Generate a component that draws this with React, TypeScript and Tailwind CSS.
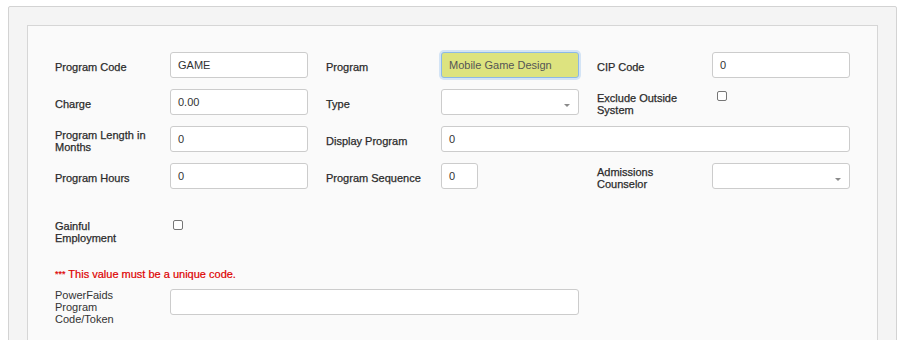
import React from "react";

const Label = ({ children, col }: { children: React.ReactNode; col: string }) => (
  <div className={`${col} h-[26px] pt-[4px] flex items-center leading-[12px] text-[#2b2b2b] [-webkit-text-stroke:0.25px_#2b2b2b]`}>
    <span>{children}</span>
  </div>
);

const Input = ({ value, col, extra = "" }: { value?: string; col: string; extra?: string }) => (
  <div
    className={`${col} h-[26px] border border-[#cccccc] rounded-[3px] bg-white px-[7px] flex items-center text-[#333] ${extra}`}
  >
    {value}
  </div>
);

const Select = ({ col }: { col: string }) => (
  <div className={`${col} h-[26px] border border-[#cccccc] rounded-[3px] bg-white flex items-center justify-end pr-[8px] pt-[7px]`}>
    <div className="w-0 h-0 border-x-[3px] border-x-transparent border-t-[3px] border-t-[#8a8a8a]" />
  </div>
);

const Checkbox = ({ className = "" }: { className?: string }) => (
  <div className={`w-[10px] h-[10px] border border-[#767676] rounded-[2px] bg-white ${className}`} />
);

export default function App() {
  const grid = "grid grid-cols-[115px_138px_18px_115px_138px_18px_115px_138px]";
  return (
    <div className="min-h-[340px] bg-white pt-[6px] font-['Liberation_Sans',Arial,sans-serif] text-[11px]">
      <div className="ml-[8px] w-[889px] border border-[#d3d3d3] rounded-[2px] bg-[#f4f4f4] p-[18px]">
        <div className="border border-[#d6d6d6] bg-[#fafafa] pl-[27px] pt-[26px] pb-[40px]">
          <div className={`${grid} gap-y-[11px]`}>
            <Label col="col-start-1">Program Code</Label>
            <Input col="col-start-2" value="GAME" />
            <Label col="col-start-4">Program</Label>
            <div className="col-start-5 h-[26px] border border-[#8cb9e8] rounded-[3px] bg-[#dde37f] px-[7px] flex items-center text-[#555] shadow-[0_0_0_2px_rgba(140,185,235,0.35)]">
              Mobile Game Design
            </div>
            <Label col="col-start-7">CIP Code</Label>
            <Input col="col-start-8" value="0" />

            <Label col="col-start-1">Charge</Label>
            <Input col="col-start-2" value="0.00" />
            <Label col="col-start-4">Type</Label>
            <Select col="col-start-5" />
            <Label col="col-start-7">
              Exclude Outside
              <br />
              System
            </Label>
            <div className="col-start-8 h-[26px]">
              <Checkbox className="ml-[5px] mt-[2px]" />
            </div>

            <Label col="col-start-1">
              Program Length in
              <br />
              Months
            </Label>
            <Input col="col-start-2" value="0" />
            <Label col="col-start-4">Display Program</Label>
            <Input col="col-start-5 col-span-4" value="0" />

            <Label col="col-start-1">Program Hours</Label>
            <Input col="col-start-2" value="0" />
            <Label col="col-start-4">Program Sequence</Label>
            <div className="col-start-5 flex">
              <div className="w-[37px] h-[26px] border border-[#cccccc] rounded-[3px] bg-white px-[7px] flex items-center text-[#333]">
                0
              </div>
            </div>
            <Label col="col-start-7">
              Admissions
              <br />
              Counselor
            </Label>
            <Select col="col-start-8" />
          </div>

          <div className={`${grid} mt-[28px]`}>
            <Label col="col-start-1">
              Gainful
              <br />
              Employment
            </Label>
            <div className="col-start-2 h-[26px]">
              <Checkbox className="ml-[3px] mt-[3px]" />
            </div>
          </div>

          <div className="mt-[25px] leading-[12px] text-[#dd0000] [-webkit-text-stroke:0.2px_#dd0000]">
            <span className="text-[9px] align-top">***</span> This value must be a unique code.
          </div>

          <div className={`${grid} mt-[9px]`}>
            <div className="col-start-1 leading-[12px] text-[#333]">
              PowerFaids
              <br />
              Program
              <br />
              Code/Token
            </div>
            <Input col="col-start-2 col-span-4" />
          </div>
        </div>
      </div>
    </div>
  );
}
